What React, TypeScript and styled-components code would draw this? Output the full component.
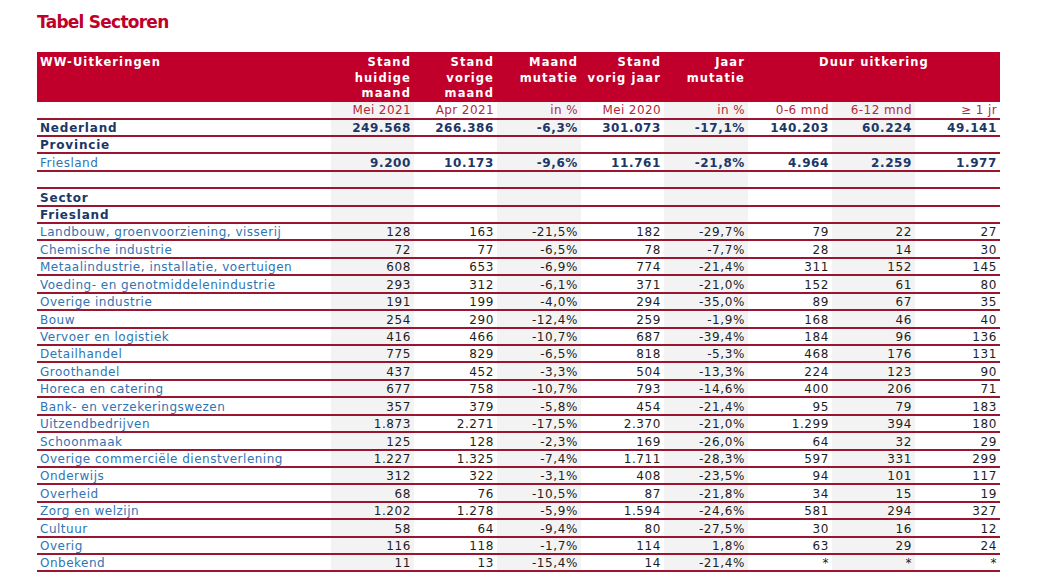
import React from "react";
import styled, { createGlobalStyle } from "styled-components";

const Global = createGlobalStyle`
  html, body { margin: 0; padding: 0; background: #ffffff; }
  body { font-family: "DejaVu Sans", Verdana, sans-serif; }
`;

const RED = "#c0002a";
const LINE = "#9b1530";
const NAVY = "#1b3768";
const LINK = "#2f74b3";
const GREY = "#f3f3f3";

const Page = styled.div`
  padding: 11px 0 0 37px;
  width: 963px;
`;

const Title = styled.h1`
  margin: 0 0 19px 0;
  font-family: "DejaVu Sans", Verdana, sans-serif;
  font-weight: bold;
  font-size: 17px;
  line-height: 22px;
  letter-spacing: -0.75px;
  color: ${RED};
`;

const Table = styled.table`
  border-collapse: collapse;
  table-layout: fixed;
  width: 963px;
  font-size: 12px;
`;

const HeadCell = styled.th<{ $align?: "left" | "right" | "center" }>`
  background: ${RED};
  color: #ffffff;
  font-weight: bold;
  font-size: 11.5px;
  line-height: 15.5px;
  letter-spacing: 1.1px;
  vertical-align: top;
  text-align: ${(p) => p.$align ?? "right"};
  padding: 3px 3px 0 3px;
  height: 45px;
`;

const UnitCell = styled.td<{ $shade?: boolean }>`
  background: ${(p) => (p.$shade ? GREY : "#ffffff")};
  color: #b3283a;
  text-align: right;
  height: 16px;
  padding: 0 3px 0 3px;
  line-height: 16px;
  letter-spacing: 0.4px;
  vertical-align: bottom;
  border-bottom: 2px solid ${LINE};
`;

const Row = styled.tr`
  height: 17.43px;
`;

const LabelCell = styled.td<{ $strong?: boolean }>`
  color: ${(p) => (p.$strong ? NAVY : LINK)};
  font-weight: ${(p) => (p.$strong ? "bold" : "normal")};
  letter-spacing: ${(p) => (p.$strong ? "0.8px" : "0.5px")};
  text-align: left;
  padding: 0 0 0 3px;
  line-height: 14px;
  vertical-align: bottom;
  white-space: nowrap;
  overflow: visible;
  border-bottom: 2px solid ${LINE};
`;

const NumCell = styled.td<{ $shade?: boolean; $strong?: boolean }>`
  background: ${(p) => (p.$shade ? GREY : "#ffffff")};
  color: ${(p) => (p.$strong ? NAVY : "#1e1e1e")};
  font-weight: ${(p) => (p.$strong ? "bold" : "normal")};
  letter-spacing: ${(p) => (p.$strong ? "0.6px" : "0.6px")};
  text-align: right;
  padding: 0 3px 0 0;
  line-height: 14px;
  vertical-align: bottom;
  white-space: nowrap;
  border-bottom: 2px solid ${LINE};
`;

const widths = [294, 83, 83, 84, 83, 84, 84, 83, 85];
const units = ["Mei 2021", "Apr 2021", "in %", "Mei 2020", "in %", "0-6 mnd", "6-12 mnd", "≥ 1 jr"];

type Line = { label: string; values: string[]; labelStrong?: boolean; numStrong?: boolean };

const empty = ["", "", "", "", "", "", "", ""];

const sectors: [string, ...string[]][] = [
  ["Landbouw, groenvoorziening, visserij", "128", "163", "-21,5%", "182", "-29,7%", "79", "22", "27"],
  ["Chemische industrie", "72", "77", "-6,5%", "78", "-7,7%", "28", "14", "30"],
  ["Metaalindustrie, installatie, voertuigen", "608", "653", "-6,9%", "774", "-21,4%", "311", "152", "145"],
  ["Voeding- en genotmiddelenindustrie", "293", "312", "-6,1%", "371", "-21,0%", "152", "61", "80"],
  ["Overige industrie", "191", "199", "-4,0%", "294", "-35,0%", "89", "67", "35"],
  ["Bouw", "254", "290", "-12,4%", "259", "-1,9%", "168", "46", "40"],
  ["Vervoer en logistiek", "416", "466", "-10,7%", "687", "-39,4%", "184", "96", "136"],
  ["Detailhandel", "775", "829", "-6,5%", "818", "-5,3%", "468", "176", "131"],
  ["Groothandel", "437", "452", "-3,3%", "504", "-13,3%", "224", "123", "90"],
  ["Horeca en catering", "677", "758", "-10,7%", "793", "-14,6%", "400", "206", "71"],
  ["Bank- en verzekeringswezen", "357", "379", "-5,8%", "454", "-21,4%", "95", "79", "183"],
  ["Uitzendbedrijven", "1.873", "2.271", "-17,5%", "2.370", "-21,0%", "1.299", "394", "180"],
  ["Schoonmaak", "125", "128", "-2,3%", "169", "-26,0%", "64", "32", "29"],
  ["Overige commerciële dienstverlening", "1.227", "1.325", "-7,4%", "1.711", "-28,3%", "597", "331", "299"],
  ["Onderwijs", "312", "322", "-3,1%", "408", "-23,5%", "94", "101", "117"],
  ["Overheid", "68", "76", "-10,5%", "87", "-21,8%", "34", "15", "19"],
  ["Zorg en welzijn", "1.202", "1.278", "-5,9%", "1.594", "-24,6%", "581", "294", "327"],
  ["Cultuur", "58", "64", "-9,4%", "80", "-27,5%", "30", "16", "12"],
  ["Overig", "116", "118", "-1,7%", "114", "1,8%", "63", "29", "24"],
  ["Onbekend", "11", "13", "-15,4%", "14", "-21,4%", "*", "*", "*"],
];

const lines: Line[] = [
  {
    label: "Nederland",
    labelStrong: true,
    numStrong: true,
    values: ["249.568", "266.386", "-6,3%", "301.073", "-17,1%", "140.203", "60.224", "49.141"],
  },
  { label: "Provincie", labelStrong: true, values: empty },
  {
    label: "Friesland",
    numStrong: true,
    values: ["9.200", "10.173", "-9,6%", "11.761", "-21,8%", "4.964", "2.259", "1.977"],
  },
  { label: "", values: empty },
  { label: "Sector", labelStrong: true, values: empty },
  { label: "Friesland", labelStrong: true, values: empty },
  ...sectors.map(([label, ...values]) => ({ label, values })),
];

const Br = () => <br />;

export default function App() {
  return (
    <>
      <Global />
      <Page>
        <Title>Tabel Sectoren</Title>
        <Table>
          <colgroup>
            {widths.map((w, i) => (
              <col key={i} style={{ width: w }} />
            ))}
          </colgroup>
          <thead>
            <tr>
              <HeadCell $align="left">WW-Uitkeringen</HeadCell>
              <HeadCell>
                Stand<Br />huidige<Br />maand
              </HeadCell>
              <HeadCell>
                Stand<Br />vorige<Br />maand
              </HeadCell>
              <HeadCell>
                Maand<Br />mutatie
              </HeadCell>
              <HeadCell>
                Stand<Br />vorig jaar
              </HeadCell>
              <HeadCell>
                Jaar<Br />mutatie
              </HeadCell>
              <HeadCell colSpan={3} $align="center">
                Duur uitkering
              </HeadCell>
            </tr>
            <tr>
              <UnitCell />
              {units.map((u, i) => (
                <UnitCell key={i} $shade={i % 2 === 0}>
                  {u}
                </UnitCell>
              ))}
            </tr>
          </thead>
          <tbody>
            {lines.map((l, r) => (
              <Row key={r}>
                <LabelCell $strong={l.labelStrong}>{l.label}</LabelCell>
                {l.values.map((v, i) => (
                  <NumCell key={i} $shade={i % 2 === 0} $strong={l.numStrong}>
                    {v}
                  </NumCell>
                ))}
              </Row>
            ))}
          </tbody>
        </Table>
      </Page>
    </>
  );
}
